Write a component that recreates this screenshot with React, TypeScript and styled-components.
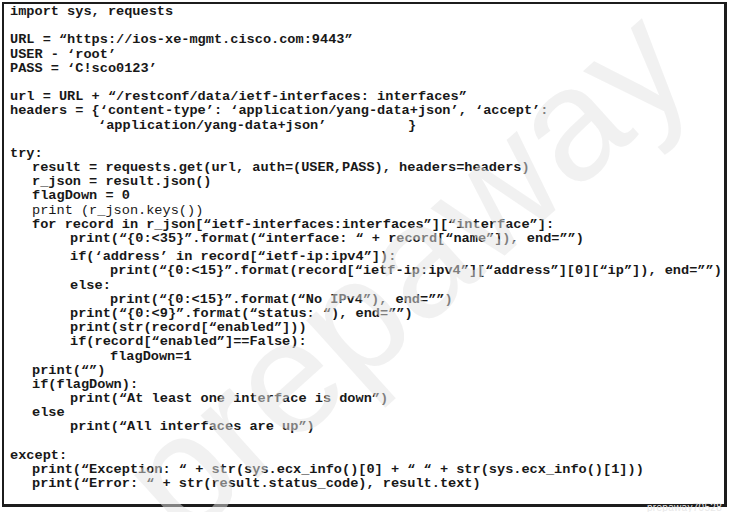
import React from "react";
import styled, { createGlobalStyle } from "styled-components";

const Global = createGlobalStyle`
  html, body { margin: 0; padding: 0; background: #ffffff; }
  body { width: 730px; height: 512px; overflow: hidden; }
`;

const Page = styled.div`
  width: 730px;
  height: 512px;
  padding: 2px 0 0 2px;
  box-sizing: border-box;
  background: #ffffff;
  position: relative;
  overflow: hidden;
`;

const Frame = styled.div`
  position: relative;
  width: 725px;
  height: 505px;
  box-sizing: border-box;
  border-style: solid;
  border-color: #1c1c1c;
  border-width: 2px 3px 3px 2px;
  padding: 1px 0 0 6px;
`;

const Code = styled.div`
  display: flex;
  flex-direction: column;
  font-family: "Liberation Mono", "Courier New", monospace;
  font-size: 13.6px;
  line-height: 14.2px;
  color: #181818;
`;

const Line = styled.div<{ $indent: number; $light?: boolean; $gap?: number }>`
  height: 14.2px;
  padding-left: ${(p) => p.$indent}px;
  margin-top: ${(p) => p.$gap ?? 0}px;
  font-weight: ${(p) => (p.$light ? 400 : 700)};
  white-space: pre;
`;

const Watermark = styled.div`
  position: absolute;
  left: 400px;
  top: 268px;
  transform: translate(-50%, -50%) rotate(-42deg);
  font-family: "Liberation Sans", Arial, sans-serif;
  font-size: 160px;
  font-weight: 400;
  line-height: 1;
  color: rgba(228, 228, 228, 0.5);
  pointer-events: none;
  white-space: nowrap;
  z-index: 2;
`;

const Stamp = styled.div`
  position: absolute;
  right: 8px;
  bottom: -1px;
  font-family: "Liberation Sans", Arial, sans-serif;
  font-size: 10px;
  line-height: 10px;
  color: #e8e8e8;
  letter-spacing: 0.3px;
`;

type L = { t: string; i?: number; light?: boolean; gap?: number };

const I1 = 22;
const I2 = 60;
const I3 = 100;

const lines: L[] = [
  { t: "import sys, requests" },
  { t: "" },
  { t: "URL = \u201Chttps://ios-xe-mgmt.cisco.com:9443\u201D" },
  { t: "USER - \u2018root\u2019" },
  { t: "PASS = \u2018C!sco0123\u2019" },
  { t: "" },
  { t: "url = URL + \u201C/restconf/data/ietf-interfaces: interfaces\u201D" },
  { t: "headers = {\u2018content-type\u2019: \u2018application/yang-data+json\u2019, \u2018accept\u2019:" },
  { t: "\u2018application/yang-data+json\u2019          }", i: 88 },
  { t: "" },
  { t: "try:" },
  { t: "result = requests.get(url, auth=(USER,PASS), headers=headers)", i: I1 },
  { t: "r_json = result.json()", i: I1 },
  { t: "flagDown = 0", i: I1 },
  { t: "print (r_json.keys())", i: I1, light: true },
  { t: "for record in r_json[\u201Cietf-interfaces:interfaces\u201D][\u201Cinterface\u201D]:", i: I1 },
  { t: "print(\u201C{0:<35}\u201D.format(\u201Cinterface: \u201C + record[\u201Cname\u201D]), end=\u201D\u201D)", i: I2 },
  { t: "if(\u2018address\u2019 in record[\u201Cietf-ip:ipv4\u201D]):", i: I2, gap: 4 },
  { t: "print(\u201C{0:<15}\u201D.format(record[\u201Cietf-ip:ipv4\u201D][\u201Caddress\u201D][0][\u201Cip\u201D]), end=\u201D\u201D)", i: I3 },
  { t: "else:", i: I2 },
  { t: "print(\u201C{0:<15}\u201D.format(\u201CNo IPv4\u201D), end=\u201D\u201D)", i: I3 },
  { t: "print(\u201C{0:<9}\u201D.format(\u201Cstatus: \u201C), end=\u201D\u201D)", i: I2 },
  { t: "print(str(record[\u201Cenabled\u201D]))", i: I2 },
  { t: "if(record[\u201Cenabled\u201D]==False):", i: I2 },
  { t: "flagDown=1", i: I3 },
  { t: "print(\u201C\u201D)", i: I1 },
  { t: "if(flagDown):", i: I1 },
  { t: "print(\u201CAt least one interface is down\u201D)", i: I2 },
  { t: "else", i: I1 },
  { t: "print(\u201CAll interfaces are up\u201D)", i: I2 },
  { t: "" },
  { t: "except:" },
  { t: "print(\u201CException: \u201C + str(sys.ecx_info()[0] + \u201C \u201C + str(sys.ecx_info()[1]))", i: I1 },
  { t: "print(\u201CError: \u201C + str(result.status_code), result.text)", i: I1 },
];

export default function App() {
  return (
    <Page>
      <Global />
      <Frame>
        <Code>
          {lines.map((l, k) => (
            <Line key={k} $indent={l.i ?? 0} $light={l.light} $gap={l.gap}>
              {l.t || "\u00A0"}
            </Line>
          ))}
        </Code>
        <Watermark>prepaway</Watermark>
      </Frame>
      <Stamp>prepaway70528</Stamp>
    </Page>
  );
}
